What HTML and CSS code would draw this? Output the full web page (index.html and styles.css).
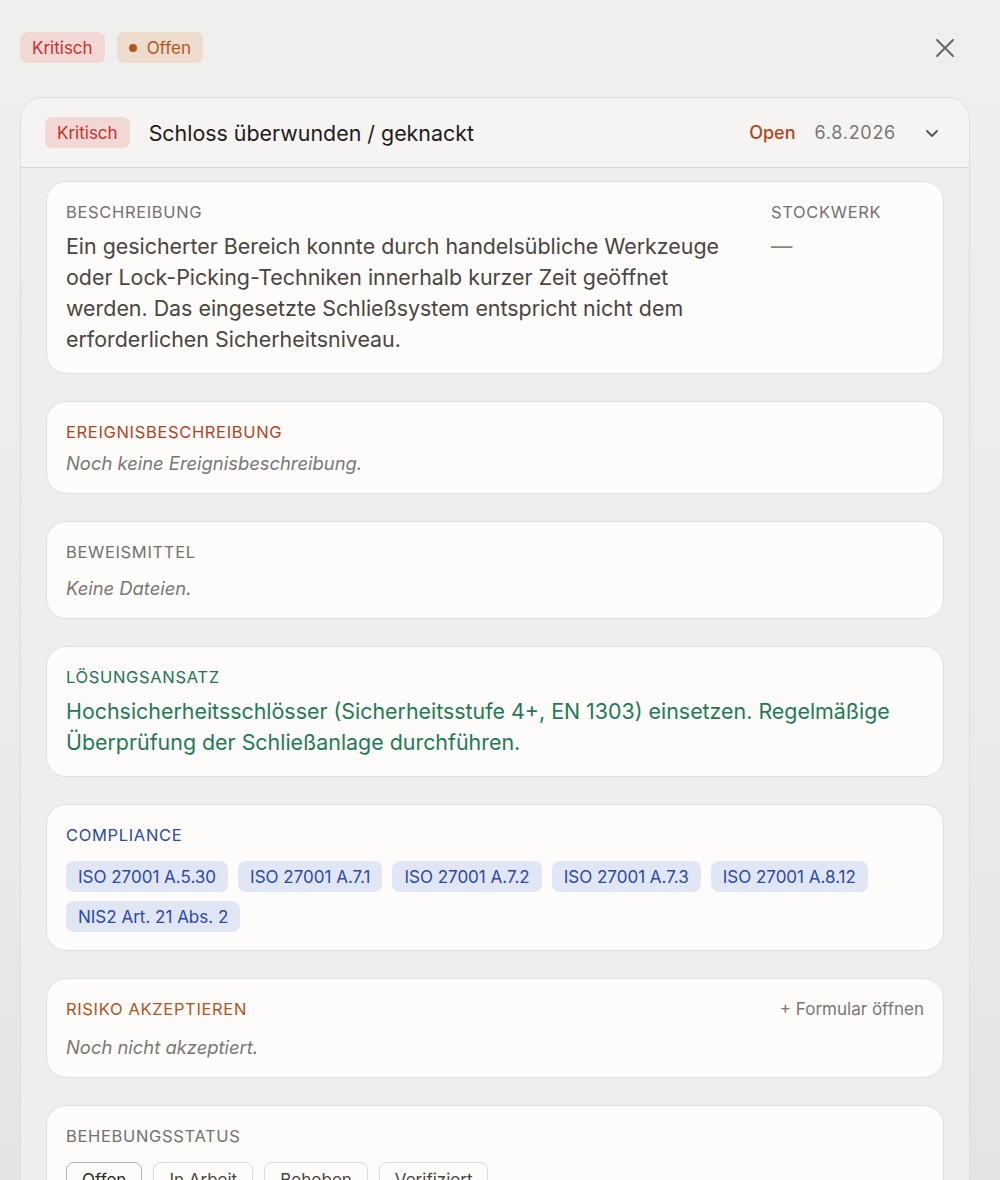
FILE: index.html
```html
<!DOCTYPE html>
<html lang="de">
<head>
    <meta charset="UTF-8">
    <meta name="viewport" content="width=device-width, initial-scale=1.0">
    <title>Befund – Schloss überwunden / geknackt</title>
    <link rel="stylesheet" href="styles.css">
</head>
<body>
    <div class="topbar">
        <div class="tags">
            <span class="badge badge-critical">Kritisch</span>
            <span class="badge badge-open"><span class="dot"></span>Offen</span>
        </div>
        <button class="close" aria-label="Schließen">
            <svg width="20" height="20" viewBox="0 0 20 20"><path d="M2 2 L18 18 M18 2 L2 18" stroke="#666" stroke-width="2" stroke-linecap="round" fill="none"/></svg>
        </button>
    </div>

    <div class="finding">
        <div class="finding-head">
            <span class="badge badge-critical">Kritisch</span>
            <span class="finding-title">Schloss überwunden / geknackt</span>
            <span class="state">Open</span>
            <span class="date">6.8.2026</span>
            <svg class="chevron" width="16" height="16" viewBox="0 0 16 16"><path d="M3 6 L8 11 L13 6" stroke="#555" stroke-width="1.8" stroke-linecap="round" stroke-linejoin="round" fill="none"/></svg>
        </div>

        <div class="finding-body">
            <section class="panel panel-split">
                <div>
                    <div class="label">Beschreibung</div>
                    <p class="text">Ein gesicherter Bereich konnte durch handelsübliche Werkzeuge oder Lock-Picking-Techniken innerhalb kurzer Zeit geöffnet werden. Das eingesetzte Schließsystem entspricht nicht dem erforderlichen Sicherheitsniveau.</p>
                </div>
                <div>
                    <div class="label">Stockwerk</div>
                    <p class="text muted">—</p>
                </div>
            </section>

            <section class="panel">
                <div class="label label-red">Ereignisbeschreibung</div>
                <p class="empty">Noch keine Ereignisbeschreibung.</p>
            </section>

            <section class="panel">
                <div class="label">Beweismittel</div>
                <p class="empty files">Keine Dateien.</p>
            </section>

            <section class="panel">
                <div class="label label-green">Lösungsansatz</div>
                <p class="text text-green">Hochsicherheitsschlösser (Sicherheitsstufe 4+, EN 1303) einsetzen. Regelmäßige Überprüfung der Schließanlage durchführen.</p>
            </section>

            <section class="panel">
                <div class="label label-blue">Compliance</div>
                <div class="chips">
                    <span class="chip">ISO 27001 A.5.30</span>
                    <span class="chip">ISO 27001 A.7.1</span>
                    <span class="chip">ISO 27001 A.7.2</span>
                    <span class="chip">ISO 27001 A.7.3</span>
                    <span class="chip">ISO 27001 A.8.12</span>
                    <span class="chip">NIS2 Art. 21 Abs. 2</span>
                </div>
            </section>

            <section class="panel">
                <div class="panel-row">
                    <div class="label label-orange">Risiko akzeptieren</div>
                    <a class="link" href="#">+ Formular öffnen</a>
                </div>
                <p class="empty accept">Noch nicht akzeptiert.</p>
            </section>

            <section class="panel">
                <div class="label">Behebungsstatus</div>
                <div class="status-group">
                    <button class="status active">Offen</button>
                    <button class="status">In Arbeit</button>
                    <button class="status">Behoben</button>
                    <button class="status">Verifiziert</button>
                </div>
            </section>
        </div>
    </div>
</body>
</html>
```

FILE: styles.css
```css
body {
    margin: 0;
    padding: 0 30px 0 20px;
    font-family: Inter, "Noto Sans", sans-serif;
    background: linear-gradient(180deg, #efefee 0%, #ebebea 60%, #e4e4e3 100%);
    color: #2a2724;
    height: 1180px;
    overflow: hidden;
}
.topbar {
    display: flex;
    align-items: center;
    justify-content: space-between;
    padding: 32px 0 34px 0;
}
.tags {
    display: flex;
    gap: 12px;
}
.badge {
    display: inline-flex;
    align-items: center;
    height: 31px;
    padding: 0 12px;
    border-radius: 7px;
    font-size: 17px;
    box-sizing: border-box;
}
.badge-critical {
    background: #f1d8d5;
    color: #c9302c;
}
.badge-open {
    background: #eedccf;
    color: #b4561b;
}
.dot {
    width: 8px;
    height: 8px;
    border-radius: 50%;
    background: #b4561b;
    margin-right: 10px;
}
.close {
    background: none;
    border: 0;
    padding: 0;
    margin-right: 15px;
    cursor: pointer;
    display: flex;
}
.finding {
    background: #efeeec;
    border: 1px solid #dddcda;
    border-radius: 22px;
    overflow: hidden;
    height: 1200px;
}
.finding-head {
    display: flex;
    align-items: center;
    height: 69px;
    padding: 0 29px 0 24px;
    background: #f5f4f2;
    border-bottom: 1px solid #d9d8d6;
}
.finding-head .badge {
    margin-right: 19px;
}
.finding-title {
    font-size: 21.4px;
    color: #1f1c1a;
    flex: 1;
}
.state {
    color: #b8451c;
    font-size: 18px;
    font-weight: 500;
    margin-right: 19px;
}
.date {
    color: #7a7672;
    font-size: 18px;
    letter-spacing: 0.04em;
    margin-right: 28px;
}
.finding-body {
    display: flex;
    flex-direction: column;
    gap: 27px;
    padding: 13px 25px;
}
.panel {
    background: #fdfcfb;
    border: 1px solid #e2e0de;
    border-radius: 20px;
    padding: 19px 19px 18px 19px;
}
.panel-split {
    display: grid;
    grid-template-columns: 680px 1fr;
    gap: 25px;
}
.panel-row {
    display: flex;
    justify-content: space-between;
    align-items: center;
}
.label {
    font-size: 16.5px;
    letter-spacing: 0.04em;
    text-transform: uppercase;
    color: #75716d;
    line-height: 22px;
}
.label-red { color: #b4431c; }
.label-green { color: #23744d; }
.label-blue { color: #2c4aa5; }
.label-orange { color: #b0561c; }
.text {
    margin: 8px 0 0 0;
    font-size: 21.4px;
    line-height: 31px;
    color: #4b4541;
}
.text.muted {
    color: #8a8580;
}
.text-green {
    color: #1f7b53;
}
.empty {
    margin: 8px 0 0 0;
    font-size: 18.4px;
    line-height: 24px;
    font-style: italic;
    color: #7c7773;
}
.empty.files {
    margin-top: 13px;
}
.empty.accept {
    margin-top: 15px;
}
.link {
    font-size: 17px;
    color: #7c7773;
    text-decoration: none;
}
.chips {
    display: flex;
    flex-wrap: wrap;
    gap: 9px 10px;
    margin-top: 15px;
}
.chip {
    display: inline-flex;
    align-items: center;
    height: 31px;
    padding: 0 12px;
    border-radius: 8px;
    background: #e1e6f5;
    color: #2a48ad;
    font-size: 17px;
}
.status-group {
    display: flex;
    gap: 11px;
    margin-top: 15px;
}
.status {
    font-family: inherit;
    font-size: 17px;
    color: #4b4541;
    background: #fdfcfb;
    border: 1px solid #dcdad7;
    border-radius: 8px;
    height: 36px;
    padding: 0 15px;
    cursor: pointer;
}
.status.active {
    border-color: #b9b6b2;
    color: #2a2724;
}
```
